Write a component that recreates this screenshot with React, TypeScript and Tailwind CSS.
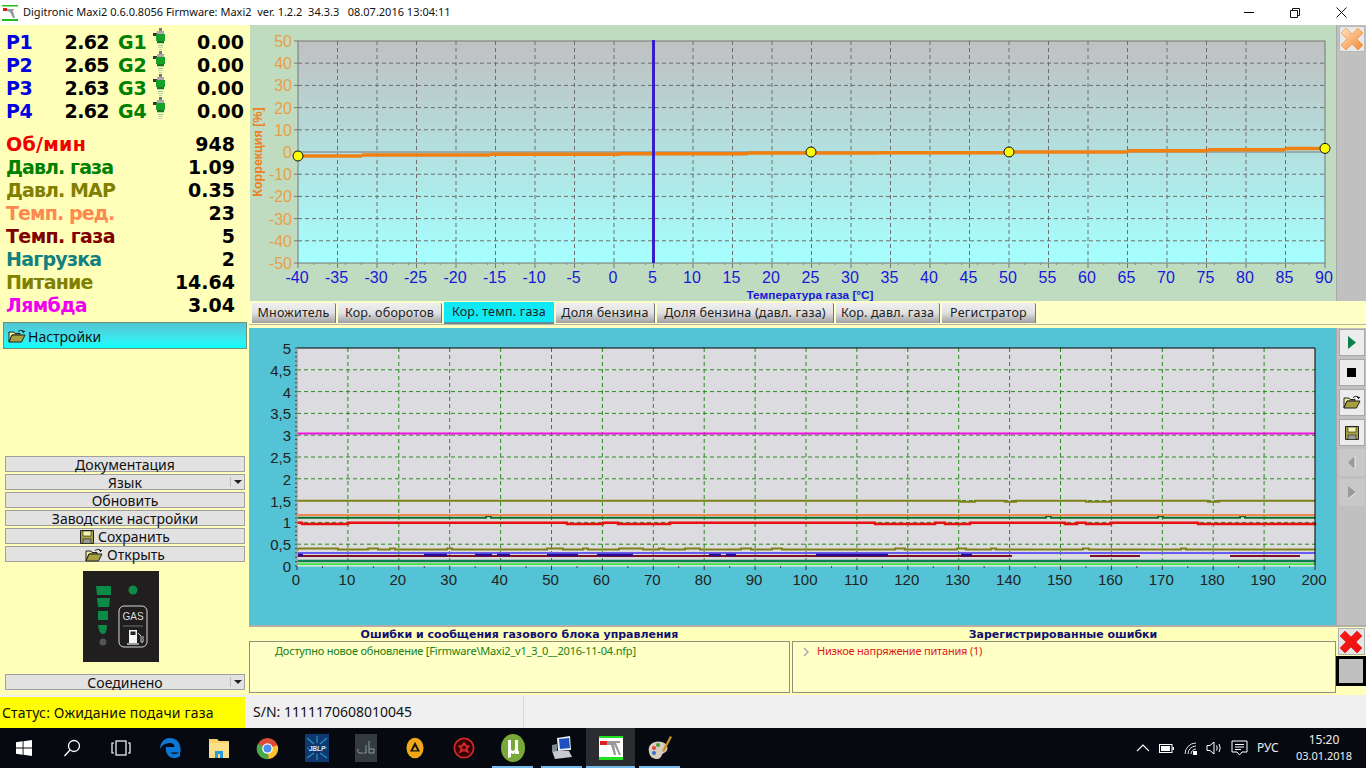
import React from "react";

const DV = "font-['DejaVu_Sans']";
const UI = "font-['Noto_Sans']";

const pRows = [
  ["P1", "2.62", "G1"],
  ["P2", "2.65", "G2"],
  ["P3", "2.63", "G3"],
  ["P4", "2.62", "G4"],
];
const stats: [string, string, string, string][] = [
  ["Об/мин", "948", "text-[#f00000]", "tracking-[0.3px]"],
  ["Давл. газа", "1.09", "text-[#008000]", "tracking-[-0.9px]"],
  ["Давл. MAP", "0.35", "text-[#808000]", "tracking-[-0.9px]"],
  ["Темп. ред.", "23", "text-[#ff8850]", "tracking-[-0.9px]"],
  ["Темп. газа", "5", "text-[#800000]", "tracking-[-0.6px]"],
  ["Нагрузка", "2", "text-[#108080]", "tracking-[-0.75px]"],
  ["Питание", "14.64", "text-[#808000]", "tracking-[-0.85px]"],
  ["Лямбда", "3.04", "text-[#f000f0]", "tracking-[-0.65px]"],
];

function Injector() {
  return (
    <svg width="13" height="24" viewBox="0 0 13 24" className="shrink-0">
      <rect x="6" y="0" width="3" height="3" fill="#777" />
      <rect x="4" y="3" width="7" height="3" fill="#aaa" />
      <rect x="0" y="5" width="4" height="3" fill="#333" />
      <rect x="3" y="6" width="9" height="7" fill="#18a028" />
      <rect x="4" y="13" width="7" height="2" fill="#107a20" />
      <rect x="4" y="15" width="7" height="1" fill="#bcd8a8" />
      <rect x="5" y="17" width="5" height="1" fill="#9ac890" />
      <rect x="5" y="19" width="5" height="1" fill="#bcd8a8" />
      <rect x="6" y="21" width="3" height="1" fill="#c0d0b0" />
    </svg>
  );
}

function Folder({ s = 18 }: { s?: number }) {
  return (
    <svg width={s} height={s * 0.78} viewBox="0 0 18 14" className="shrink-0">
      <path d="M1 3 L6 3 L7 4.5 L12 4.5 L12 6 L4 6 L1 13 Z" fill="#f2ee9c" stroke="#222" strokeWidth="1" />
      <path d="M4 6 L17 6 L13.5 13 L1 13 Z" fill="#a8a040" stroke="#222" strokeWidth="1" />
      <path d="M10 2.5 Q13 0 15.5 2 L15.5 4 M14 2.5 L17 2.5" fill="none" stroke="#222" strokeWidth="1" />
    </svg>
  );
}

function Floppy({ s = 14 }: { s?: number }) {
  return (
    <svg width={s} height={s} viewBox="0 0 14 14" className="shrink-0">
      <path d="M0.5 0.5 H13.5 V13.5 H0.5 Z" fill="#a8a040" stroke="#222" />
      <rect x="3" y="1" width="8" height="5" fill="#f6f2b0" stroke="#222" strokeWidth="0.6" />
      <rect x="3" y="9" width="8" height="4.5" fill="#999" stroke="#222" strokeWidth="0.6" />
    </svg>
  );
}

function SideButton({ children, arrow }: { children: React.ReactNode; arrow?: boolean }) {
  return (
    <div className={`relative h-[16px] mx-[5px] w-[240px] bg-[#e2e2e2] border border-[#a0a0a0] flex items-end justify-center ${UI} text-[14px] leading-[15px] text-[#111]`}>
      <span className="flex items-end gap-[4px] translate-y-[1px]">{children}</span>
      {arrow && (
        <span className="absolute right-[1px] top-[2px] flex items-center border-l border-[#bbb] pl-[3px] h-[10px]">
          <svg width="9" height="5"><path d="M0 0 H8 L4 4 Z" fill="#222" /></svg>
        </span>
      )}
    </div>
  );
}

function GasBadge() {
  return (
    <svg width="76" height="91" viewBox="0 0 76 91">
      <rect width="76" height="91" fill="#201e1e" />
      <path d="M13 15 H28 V24 H14 Z" fill="#0c8a48" />
      <path d="M14 27 H27 L26 36 H15 Z" fill="#0c8a48" />
      <path d="M15 40 H25 V49 H15 Z" fill="#0c8a48" />
      <path d="M15 54 H24 Q24 63 20 63 Q16 63 15 54 Z" fill="#0c8a48" />
      <circle cx="20" cy="71" r="3.5" fill="#555" />
      <circle cx="50" cy="19" r="4.5" fill="#0c8a48" />
      <rect x="36" y="35" width="28" height="41" rx="5" fill="none" stroke="#eee" strokeWidth="0.9" />
      <text x="50" y="49" textAnchor="middle" fontFamily="Liberation Sans" fontSize="10" fill="#ddd">GAS</text>
      <line x1="40" y1="55" x2="60" y2="55" stroke="#999" strokeWidth="0.7" />
      <path d="M46 59 H54 V72 H46 Z" fill="#f4f4f4" />
      <rect x="47.5" y="60.5" width="5" height="3.5" fill="#222" />
      <path d="M44 73 H56" stroke="#eee" strokeWidth="1.2" />
      <path d="M55 62 L58 65 V71 Q59 72 60 71 V65" fill="none" stroke="#ddd" strokeWidth="0.9" />
    </svg>
  );
}

function Sidebar() {
  return (
    <aside className="w-[249px] shrink-0 bg-[#ffffb9] flex flex-col">
      <div className={`${DV} font-bold text-[19px] leading-[23px] pt-[6px]`}>
        {pRows.map((r) => (
          <div key={r[0]} className="flex h-[23px] items-center">
            <span className="w-[60px] pl-[6px] text-[#0000e0] tracking-[-0.5px]">{r[0]}</span>
            <span className="w-[49px] text-right text-black tracking-[-0.6px]">{r[1]}</span>
            <span className="w-[34px] pl-[9px] text-[#008000] whitespace-nowrap">{r[2]}</span>
            <span className="w-[23px] pl-[10px] -translate-y-[3px]"><Injector /></span>
            <span className="w-[78px] text-right text-black">0.00</span>
          </div>
        ))}
      </div>
      <div className={`${DV} font-bold text-[19px] leading-[23px] pt-[10px]`}>
        {stats.map(([l, v, c, t]) => (
          <div key={l} className="flex h-[23px] items-center justify-between pl-[6px] pr-[14px]">
            <span className={`${c} ${t} whitespace-nowrap`}>{l}</span>
            <span className="text-black">{v}</span>
          </div>
        ))}
      </div>
      <div className={`mt-[5px] mx-[3px] w-[244px] h-[27px] border border-[#6f8f78] bg-gradient-to-b from-[#52c4d2] to-[#00ffff] flex items-center gap-[2px] pl-[4px] pt-[1px] ${UI} text-[14px] text-[#111]`}>
        <Folder />
        <span>Настройки</span>
      </div>
      <div className="mt-[107px] flex flex-col gap-[2px]">
        <SideButton>Документация</SideButton>
        <SideButton arrow>Язык</SideButton>
        <SideButton>Обновить</SideButton>
        <SideButton>Заводские настройки</SideButton>
        <SideButton><Floppy /> Сохранить</SideButton>
        <SideButton><Folder /> Открыть</SideButton>
      </div>
      <div className="mt-[9px] flex justify-center pr-[8px]"><GasBadge /></div>
      <div className="mt-[12px]"><SideButton arrow>Соединено</SideButton></div>
    </aside>
  );
}

function TopChart() {
  const L = 48, R = 1075, T = 16, B = 238;
  const X = (v: number) => L + ((v + 40) / 130) * (R - L);
  const Y = (v: number) => T + ((50 - v) / 100) * (B - T);
  const xs = Array.from({ length: 27 }, (_, i) => -40 + i * 5);
  const ys = Array.from({ length: 11 }, (_, i) => 50 - i * 10);
  const minor = Array.from({ length: 131 }, (_, i) => -40 + i).filter((v) => v % 5 !== 0 && (v + 40) % 2 === 0);
  const segs: [number, number, number][] = [
    [48, 112, 131], [112, 240, 130], [240, 370, 129.3], [370, 498, 128.7], [498, 628, 128],
    [628, 758, 127.7], [758, 878, 127], [878, 958, 125.8], [958, 1036, 124.8], [1036, 1075, 123.4],
  ];
  return (
    <svg width="1086" height="276" viewBox="0 0 1086 276" className="block shrink-0">
      <defs>
        <linearGradient id="tg" x1="0" y1="0" x2="0" y2="1">
          <stop offset="0" stopColor="#c0c0c0" />
          <stop offset="1" stopColor="#a6ffff" />
        </linearGradient>
      </defs>
      <rect x={L} y={T} width={R - L} height={B - T} fill="url(#tg)" stroke="#777" />
      {xs.slice(1, -1).map((v) => (
        <line key={v} x1={X(v)} x2={X(v)} y1={T} y2={B} stroke="#6e6e6e" strokeDasharray="4 3" />
      ))}
      {ys.slice(1, -1).map((v) => (
        <line key={v} x1={L} x2={R} y1={Y(v)} y2={Y(v)} stroke={v === 0 ? "#777" : "#6e6e6e"} strokeDasharray={v === 0 ? undefined : "4 3"} />
      ))}
      {xs.map((v) => (
        <line key={v} x1={X(v)} x2={X(v)} y1={B} y2={B + 5} stroke="#777" />
      ))}
      {minor.map((v) => (
        <line key={v} x1={X(v)} x2={X(v)} y1={B} y2={B + 2} stroke="#888" />
      ))}
      {ys.map((v) => (
        <line key={v} x1={L - 4} x2={L} y1={Y(v)} y2={Y(v)} stroke="#777" />
      ))}
      {ys.map((v) => (
        <text key={v} x={L - 6} y={Y(v) + 6} textAnchor="end" fontFamily="Liberation Sans" fontSize="16" fill="#e8a048">{v}</text>
      ))}
      {xs.map((v) => (
        <text key={v} x={X(v) - 1} y={258} textAnchor="middle" fontFamily="Liberation Sans" fontSize="16" fill="#1818d8">{v}</text>
      ))}
      <text transform="translate(12 127) rotate(-90)" textAnchor="middle" fontFamily="Liberation Sans" fontWeight="700" fontSize="12.5" fill="#f08020">Коррекция [%]</text>
      <text x="560" y="274" textAnchor="middle" fontFamily="Liberation Sans" fontWeight="700" fontSize="11.8" fill="#1818d8">Температура газа [°C]</text>
      {segs.map(([a, b, y], i) => (
        <line key={i} x1={a} x2={b} y1={y} y2={y} stroke="#f08010" strokeWidth="3.5" />
      ))}
      <line x1={X(5)} x2={X(5)} y1={T - 1} y2={B} stroke="#3a20c8" strokeWidth="3" />
      <line x1={X(5)} x2={X(5)} y1={T - 1} y2={B} stroke="#2a2a90" strokeWidth="1" />
      {[[48, 131], [561, 127], [759, 127], [1075, 123.4]].map(([x, y]) => (
        <circle key={x} cx={x} cy={y} r="5" fill="#ffff00" stroke="#111" strokeWidth="1" />
      ))}
    </svg>
  );
}

function stepPath(x0: number, x1: number, y: number, bumps: [number, number, number][]) {
  let d = `M${x0} ${y}`;
  bumps.forEach(([a, b, dy]) => {
    d += ` H${a} V${y + dy} H${b} V${y}`;
  });
  return d + ` H${x1}`;
}

function LowerChart() {
  const ox = 250, oy = 328;
  const L = 297 - ox, R = 1315 - ox, T = 348 - oy, B = 566 - oy;
  const X = (v: number) => L + (v / 200) * (R - L);
  const Y = (v: number) => B - (v / 5) * (B - T);
  const xs = Array.from({ length: 21 }, (_, i) => i * 10);
  const ys = Array.from({ length: 11 }, (_, i) => i * 0.5);
  const P = (b: [number, number, number][]) => b.map(([a, c, d]) => [a - ox, c - ox, d] as [number, number, number]);
  const lines: [number, [number, number, number][], string, number][] = [
    [564.3, [], "#40e040", 2],
    [561, [], "#0a8050", 2.5],
    [549.5, P([[298, 338, -1], [368, 378, -1], [390, 395, -1], [447, 452, -1], [547, 563, -1], [583, 588, -1], [619, 643, -1], [659, 664, -1], [685, 700, -1], [741, 751, -1], [772, 782, -1], [895, 905, -1], [957, 966, -1], [991, 996, -1], [1083, 1089, -1], [1181, 1186, -1]]), "#808018", 2],
    [522.7, P([[302, 348, 1.2], [567, 603, 1.2], [618, 670, 1.2], [875, 935, 1.2], [945, 970, 1.2], [1065, 1077, 1.2], [1086, 1111, 1.2], [1198, 1315, 1.2]]), "#e81010", 2.5],
    [517.7, P([[486, 491, -1.5], [1046, 1051, -1.5], [1158, 1163, -1.5], [1240, 1245, -1.5]]), "#0c7020", 2],
    [515, [], "#f08a50", 2],
    [500.7, P([[960, 975, 1], [1005, 1016, 1], [1086, 1111, 1], [1208, 1219, 1]]), "#808018", 2],
    [433.4, [], "#f010e0", 2],
  ];
  const blue: [number, number][] = [[297, 1315]];
  const darkRed: [number, number][] = [[297, 1012], [1090, 1140], [1230, 1300]];
  const purple: [number, number][] = [[298, 303], [424, 447], [475, 492], [497, 510], [547, 578], [597, 633], [709, 721], [726, 736], [816, 888], [961, 972]];
  const minorX = Array.from({ length: 41 }, (_, i) => i * 5).filter((v) => v % 10 !== 0);
  const minorY = Array.from({ length: 51 }, (_, i) => i * 0.1);
  const label = (v: number) => String(v).replace(".", ",");
  return (
    <svg width="1086" height="297" viewBox="0 0 1086 297" className="block shrink-0">
      <rect x={L} y={T} width={R - L} height={B - T} fill="#dcdce0" />
      {xs.slice(1, -1).map((v) => (
        <line key={v} x1={X(v)} x2={X(v)} y1={T} y2={B} stroke="#2a8a20" strokeDasharray="4 3" />
      ))}
      {ys.slice(1, -1).map((v) => (
        <line key={v} x1={L} x2={R} y1={Y(v)} y2={Y(v)} stroke="#2a8a20" strokeDasharray="4 3" />
      ))}
      {lines.map(([y, b, c, w], i) => (
        <path key={i} d={stepPath(L, R, y - oy, b)} fill="none" stroke={c} strokeWidth={w} />
      ))}
      {blue.map(([a, b]) => (
        <line key={a} x1={a - ox} x2={b - ox} y1={553 - oy} y2={553 - oy} stroke="#6a5cf0" strokeWidth="2" />
      ))}
      {darkRed.map(([a, b]) => (
        <line key={a} x1={a - ox} x2={b - ox} y1={556 - oy} y2={556 - oy} stroke="#7a1020" strokeWidth="2" />
      ))}
      {purple.map(([a, b]) => (
        <line key={a} x1={a - ox} x2={b - ox} y1={555 - oy} y2={555 - oy} stroke="#2c0a90" strokeWidth="2.5" />
      ))}
      <path d={`M${L} ${B} V${T} H${R} V${B}`} fill="none" stroke="#000" strokeWidth="1" />
      <line x1={L} x2={L} y1={T} y2={B} stroke="#f4f4f4" />
      <line x1={L} x2={R} y1={B} y2={B} stroke="#f0f0f0" />
      {xs.map((v) => (
        <line key={v} x1={X(v)} x2={X(v)} y1={B} y2={B + 4} stroke="#333" />
      ))}
      {minorX.map((v) => (
        <line key={v} x1={X(v)} x2={X(v)} y1={B} y2={B + 2} stroke="#444" />
      ))}
      {minorY.map((v) => (
        <line key={v} x1={L - 2} x2={L} y1={Y(v)} y2={Y(v)} stroke="#444" />
      ))}
      {ys.map((v) => (
        <text key={v} x={L - 6} y={Y(v) + 6} textAnchor="end" fontFamily="Liberation Sans" fontSize="15" fill="#222">{label(v)}</text>
      ))}
      {xs.map((v) => (
        <text key={v} x={X(v) - 1} y={257} textAnchor="middle" fontFamily="Liberation Sans" fontSize="15" fill="#222">{v}</text>
      ))}
    </svg>
  );
}

function Cross({ light, dark, id }: { light: string; dark: string; id: string }) {
  return (
    <svg width="24" height="24" viewBox="0 0 24 24">
      <defs>
        <linearGradient id={id} x1="0" y1="0" x2="1" y2="1">
          <stop offset="0" stopColor={light} />
          <stop offset="1" stopColor={dark} />
        </linearGradient>
      </defs>
      <path d="M6 1 L12 7 L18 1 L23 6 L17 12 L23 18 L18 23 L12 17 L6 23 L1 18 L7 12 L1 6 Z" fill={`url(#${id})`} stroke={dark} strokeWidth="0.6" />
    </svg>
  );
}

function ToolBtn({ children, disabled }: { children: React.ReactNode; disabled?: boolean }) {
  return (
    <div className={`w-[26px] h-[27px] mx-auto flex items-center justify-center ${disabled ? "bg-[#c8c8c8]" : "bg-[#ececec] border border-[#a8a8a8]"}`}>
      {children}
    </div>
  );
}

const tabs: [string, number, boolean][] = [
  ["Множитель", 84, false],
  ["Кор. оборотов", 104, false],
  ["Кор. темп. газа", 110, true],
  ["Доля бензина", 99, false],
  ["Доля бензина (давл. газа)", 177, false],
  ["Кор. давл. газа", 104, false],
  ["Регистратор", 94, false],
];

function Content() {
  return (
    <div className="flex-1 flex flex-col min-w-0 bg-[#ffffb9]">
      <div className="h-[276px] flex">
        <div className="w-[1px] bg-[#ffffb9]" />
        <div className="bg-[#c0dcc0] w-[1086px]"><TopChart /></div>
        <div className="flex-1 bg-[#c0c0c0] pt-[1px] pl-[2px] border-l border-[#a8a8a8]">
          <div className="w-[26px] h-[26px] bg-[#e8e8e8] border border-[#b8b8b8] flex items-center justify-center">
            <Cross light="#ffe0c0" dark="#f08a30" id="orangeX" />
          </div>
        </div>
      </div>
      <div className="h-[24px] flex gap-[2px] pl-[3px] pt-[2px] items-start border-b border-[#b8b8a0] bg-[#ffffc8]">
        {tabs.map(([t, w, active]) => (
          <div
            key={t}
            style={{ width: w }}
            className={`shrink-0 flex items-center justify-center ${UI} text-[12.5px] tracking-[0.2px] text-[#222] whitespace-nowrap ${
              active
                ? "bg-[#10e8f4] border-b-2 border-[#6a8a9a] -translate-y-[1px] h-[22px]"
                : "h-[20px] bg-gradient-to-b from-[#f0f0f0] via-[#e0e0e0] to-[#a0a0a0] border-r border-[#777] rounded-tr-[2px]"
            }`}
          >
            {t}
          </div>
        ))}
      </div>
      <div className="h-[3px] bg-[#ffffc0]" />
      <div className="h-[297px] flex">
        <div className="w-[1px] bg-[#53c3d5]" />
        <div className="w-[1086px] bg-[#53c3d5]"><LowerChart /></div>
        <div className="flex-1 bg-[#c0c0c0] flex flex-col gap-[3px] pt-[1px] border-l border-[#a8a8a8]">
          <ToolBtn><svg width="10" height="15"><path d="M1 1 L9 7.5 L1 14 Z" fill="#0c8048" /></svg></ToolBtn>
          <ToolBtn><div className="w-[9px] h-[9px] bg-black" /></ToolBtn>
          <ToolBtn><Folder /></ToolBtn>
          <ToolBtn><Floppy /></ToolBtn>
          <ToolBtn disabled><svg width="10" height="15"><path d="M8 1 L1 7.5 L8 14 Z" fill="#999" /><path d="M8 1 V14" stroke="#eee" /></svg></ToolBtn>
          <ToolBtn disabled><svg width="10" height="15"><path d="M1 1 L9 7.5 L1 14 Z" fill="#999" /><path d="M1 14 L9 7.5" stroke="#eee" /></svg></ToolBtn>
        </div>
      </div>
      <div className="flex-1 flex border-t-2 border-[#b0b0a8]">
        <div className="flex-1 flex flex-col min-w-0 bg-[#ffffb9]">
          <div className={`h-[14px] flex ${DV} font-bold text-[11px] leading-[14px] text-[#101070] pt-[1px]`}>
            <div className="w-[541px] text-center">Ошибки и сообщения газового блока управления</div>
            <div className="flex-1 text-center">Зарегистрированные ошибки</div>
          </div>
          <div className={`h-[52px] flex gap-[2px] ${UI} text-[11px] tracking-[-0.2px]`}>
            <div className="w-[541px] border border-[#909080] bg-[#ffffc8] pl-[25px] pt-[1px] text-[#208010] whitespace-nowrap">
              Доступно новое обновление [Firmware\Maxi2_v1_3_0__2016-11-04.nfp]
            </div>
            <div className="flex-1 border border-[#909080] bg-[#ffffc8] pl-[10px] pt-[1px] flex items-start gap-[8px] text-[#e01818] whitespace-nowrap">
              <svg width="6" height="10" className="mt-[4px] shrink-0"><path d="M1 1 L5 5 L1 9" fill="none" stroke="#aaa" strokeWidth="1.5" /></svg>
              <span>Низкое напряжение питания (1)</span>
            </div>
          </div>
        </div>
        <div className="w-[30px] shrink-0 flex flex-col items-center bg-[#ffffb9]">
          <div className="w-[27px] h-[27px] bg-[#e4e4e4] border border-[#b0b0b0] flex items-center justify-center mt-[1px]">
            <Cross light="#ff1818" dark="#e81010" id="redX" />
          </div>
          <div className="w-[30px] h-[30px] mt-[1px] bg-[#c0c0c0] border-[3px] border-black" />
        </div>
      </div>
    </div>
  );
}

function TaskIcon({ children }: { children: React.ReactNode }) {
  return <div className="w-[49px] h-full shrink-0 flex items-center justify-center">{children}</div>;
}

function Underlined({ children, active }: { children: React.ReactNode; active?: boolean }) {
  return (
    <div className={`relative w-[49px] h-full shrink-0 flex items-center justify-center ${active ? "bg-[#2b2d30]" : ""}`}>
      {children}
      <div className={`absolute bottom-0 h-[2px] bg-[#76b9ed] ${active ? "left-0 right-0" : "left-[4px] right-[4px]"}`} />
    </div>
  );
}

function AppLogo() {
  return (
    <svg width="24" height="24" viewBox="0 0 24 24">
      <rect width="24" height="24" fill="#fff" />
      <rect y="0" width="24" height="2" fill="#20e020" />
      <rect y="21" width="24" height="3" fill="#20e020" />
      <rect x="1" y="5" width="7" height="4" fill="#d82020" />
      <path d="M8 5 H21 V7 H17 L22 19 H20 L15 8 L17 19 H15 L12 9 H8 Z" fill="#999" />
    </svg>
  );
}

function Taskbar() {
  return (
    <div className="h-[40px] bg-[#060a10] flex items-center text-white shrink-0">
      <div className="w-[47px] h-full flex items-center justify-center">
        <svg width="16" height="16" viewBox="0 0 16 16"><path d="M0 2.3 L6.6 1.3 V7.6 H0 Z M7.5 1.2 L16 0 V7.6 H7.5 Z M0 8.4 H6.6 V14.7 L0 13.8 Z M7.5 8.4 H16 V16 L7.5 14.8 Z" fill="#fff" /></svg>
      </div>
      <TaskIcon><svg width="18" height="18" viewBox="0 0 18 18" fill="none" stroke="#fff" strokeWidth="1.3"><circle cx="11" cy="7" r="5.5" /><path d="M7 11 L1.5 17" /></svg></TaskIcon>
      <TaskIcon><svg width="20" height="16" viewBox="0 0 20 16" fill="none" stroke="#fff" strokeWidth="1.2"><rect x="5" y="1" width="10" height="14" /><path d="M3 3 H1 V13 H3 M17 3 H19 V13 H17" /></svg></TaskIcon>
      <TaskIcon><svg width="22" height="24" viewBox="0 0 22 22"><path d="M11 1 C4 1 1 7 1 12 C3 8 7 6 11 6 C14 6 15.5 8 15.5 10 H7 C6 14 8 20 14 21 C17 21.5 20 20 21 19 V15 C18 17 14 18 11.5 15.5 H21.5 C22.5 8 19 1 11 1 Z" fill="#0a78d4" /></svg></TaskIcon>
      <TaskIcon><svg width="22" height="24" viewBox="0 0 22 22"><path d="M1 2 H9 L11 4 H21 V21 H1 Z" fill="#f6d268" /><path d="M1 6 H21 V21 H1 Z" fill="#fbe08a" /><path d="M7 21 V14 H15 V21 H12 V17 H10 V21 Z" fill="#2a9bd8" /></svg></TaskIcon>
      <TaskIcon><svg width="23" height="23" viewBox="0 0 24 24"><circle cx="12" cy="12" r="11" fill="#dd4b3a" /><path d="M12 12 L22.5 8.5 A11 11 0 0 1 13 23 Z" fill="#fbc02d" /><path d="M12 12 L13 23 A11 11 0 0 1 2 7 Z" fill="#4aa84f" /><circle cx="12" cy="12" r="5.5" fill="#fff" /><circle cx="12" cy="12" r="4.2" fill="#4a8ff0" /></svg></TaskIcon>
      <TaskIcon><svg width="24" height="28" viewBox="0 0 24 28"><rect width="24" height="28" fill="#0e3a70" /><path d="M2 4 L9 10 M22 4 L15 10 M2 24 L9 19 M22 24 L15 19 M12 2 V9 M12 20 V26 M2 14 H4 M20 14 H22" stroke="#2a90c8" strokeWidth="1.2" /><text x="12" y="17" textAnchor="middle" fontFamily="Liberation Sans" fontWeight="700" fontStyle="italic" fontSize="6.5" fill="#d8e8f8">JBLP</text></svg></TaskIcon>
      <TaskIcon><svg width="22" height="28" viewBox="0 0 22 28"><rect width="22" height="28" fill="#343b40" /><path d="M3 15 Q2 18 4 19 H8 M11 11 V19 M11 19 H9 M14 7 V19 H19 V15 H14" fill="none" stroke="#8a9aa0" strokeWidth="1" /></svg></TaskIcon>
      <TaskIcon><svg width="18" height="22" viewBox="0 0 20 24"><ellipse cx="10" cy="12" rx="9.5" ry="11.5" fill="#f0a818" /><path d="M10 5 L15.5 16 H4.5 Z M10 10 L7.5 14.5 H12.5 Z" fill="#141414" fillRule="evenodd" /></svg></TaskIcon>
      <TaskIcon><svg width="22" height="24" viewBox="0 0 24 24"><circle cx="12" cy="12" r="10.5" fill="#300" stroke="#d02828" strokeWidth="2" /><path d="M12 5 L15 9 L19 9 L16 13 L18 18 L12 15.5 L6 18 L8 13 L5 9 L9 9 Z" fill="#d02828" /><circle cx="12" cy="11.5" r="2" fill="#300" /></svg></TaskIcon>
      <Underlined><svg width="24" height="30" viewBox="0 0 24 28"><ellipse cx="12" cy="14" rx="12" ry="14" fill="#78a838" /><path d="M7 6 V24 L10 23 V19 Q11 20 12 20 Q13.5 20 14 18 V20 H18 V17 H17 V6 H14 V15 Q13 17 12 17 Q10 17 10 15 V6 Z" fill="#fff" /></svg></Underlined>
      <Underlined><svg width="26" height="26" viewBox="0 0 26 26"><path d="M3 16 L20 16 L23 22 L6 24 Z" fill="#c8ccd0" /><path d="M8 3 L21 1 L22 15 L9 16 Z" fill="#e8eef4" /><path d="M10 4 L20 3 L21 13 L11 14 Z" fill="#2050c0" /><path d="M3 10 L8 9 L8 16 L3 17 Z" fill="#7a8890" /></svg></Underlined>
      <Underlined active><AppLogo /></Underlined>
      <Underlined><svg width="26" height="28" viewBox="0 0 26 28"><path d="M2 18 C0 10 8 6 15 8 C22 10 22 17 17 19 C14 20 15 25 10 25 C6 25 3 23 2 18 Z" fill="#d8cdbc" /><circle cx="7" cy="14" r="2" fill="#e04040" /><circle cx="11" cy="11" r="2" fill="#40a040" /><circle cx="7" cy="19" r="2" fill="#3070d0" /><path d="M15 17 L23 2 L25 3 L17 18 Z" fill="#c8901e" /></svg></Underlined>
      <div className="flex-1" />
      <div className={`flex items-center h-full ${UI} text-[12px]`}>
        <svg width="14" height="8" viewBox="0 0 14 8" className="mr-[9px]"><path d="M1 7 L7 1 L13 7" fill="none" stroke="#fff" strokeWidth="1.1" /></svg>
        <svg width="15" height="9" viewBox="0 0 15 9" className="mr-[10px]"><rect x="0.5" y="0.5" width="12.5" height="8" fill="none" stroke="#fff" /><rect x="2" y="2" width="9" height="5" fill="#fff" /><rect x="13.5" y="3" width="1.5" height="3" fill="#fff" /></svg>
        <svg width="14" height="13" viewBox="0 0 14 13" className="mr-[8px]" fill="none" stroke="#ddd" strokeWidth="1"><path d="M1 12 A11 11 0 0 1 12 1 M4 12 A8 8 0 0 1 12 4 M7 12 A5 5 0 0 1 12 7" /><rect x="9" y="9" width="4" height="4" fill="#fff" stroke="none" /></svg>
        <svg width="17" height="14" viewBox="0 0 17 14" className="mr-[8px]" fill="none" stroke="#fff" strokeWidth="1"><path d="M1 4.5 H4 L8 1 V13 L4 9.5 H1 Z M10.5 4.5 Q12 7 10.5 9.5 M13 3 Q15.5 7 13 11" /></svg>
        <svg width="17" height="17" viewBox="0 0 17 17" className="mr-[9px]" fill="none" stroke="#fff" strokeWidth="1"><path d="M1 1 H16 V12 H11 L8.5 15 L6 12 H1 Z M4 4.5 H13 M4 7 H13 M4 9.5 H10" /></svg>
        <span className="mr-[17px] text-[#eee] w-[23px]">РУС</span>
        <div className="w-[54px] mr-[15px] flex flex-col items-center leading-[16px] text-[#eee]">
          <div>15:20</div>
          <div className="whitespace-nowrap text-[11px]">03.01.2018</div>
        </div>
      </div>
    </div>
  );
}

export default function App() {
  return (
    <div className="w-[1366px] h-[768px] flex flex-col overflow-hidden bg-white">
      <div className="h-[25px] shrink-0 bg-white flex items-center relative">
        <div className="pl-[2px] pr-[5px] flex"><svg width="16" height="16" viewBox="0 0 16 16"><rect y="0" width="16" height="1.5" fill="#20c020" /><rect y="14" width="16" height="2" fill="#20c020" /><rect x="1" y="3" width="4" height="3" fill="#d82020" /><path d="M5 4 L12 4 L11 6 L13 13 L11 13 L8 7 L5 6 Z" fill="#999" /></svg></div>
        <span className={`${UI} text-[11px] whitespace-pre text-[#111]`}>Digitronic Maxi2 0.6.0.8056 Firmware: Maxi2  ver. 1.2.2  34.3.3   08.07.2016 13:04:11</span>
        <div className="flex-1" />
        <div className="flex items-center pr-[2px]">
          <div className="w-[46px] flex justify-center"><div className="w-[10px] h-[1px] bg-black" /></div>
          <div className="w-[46px] flex justify-center"><svg width="10" height="10"><path d="M2.5 2.5 V0.5 H9.5 V7.5 H7.5 M0.5 2.5 H7.5 V9.5 H0.5 Z" fill="none" stroke="#111" /></svg></div>
          <div className="w-[46px] flex justify-center"><svg width="11" height="11"><path d="M0.5 0.5 L10.5 10.5 M10.5 0.5 L0.5 10.5" stroke="#111" /></svg></div>
        </div>
      </div>
      <div className="h-[670px] flex shrink-0">
        <Sidebar />
        <Content />
      </div>
      <div className={`h-[33px] shrink-0 bg-[#f0f0f0] flex ${UI} text-[14px]`}>
        <div className="w-[245px] h-[31px] mt-[2px] bg-[#ffff00] flex items-center pl-[2px] text-[#111] whitespace-nowrap tracking-[0.15px]">Статус: Ожидание подачи газа</div>
        <div className="w-[279px] pl-[8px] flex items-center border-r border-[#d8d8d8] text-[#111]">S/N: 1111170608010045</div>
      </div>
      <Taskbar />
    </div>
  );
}
